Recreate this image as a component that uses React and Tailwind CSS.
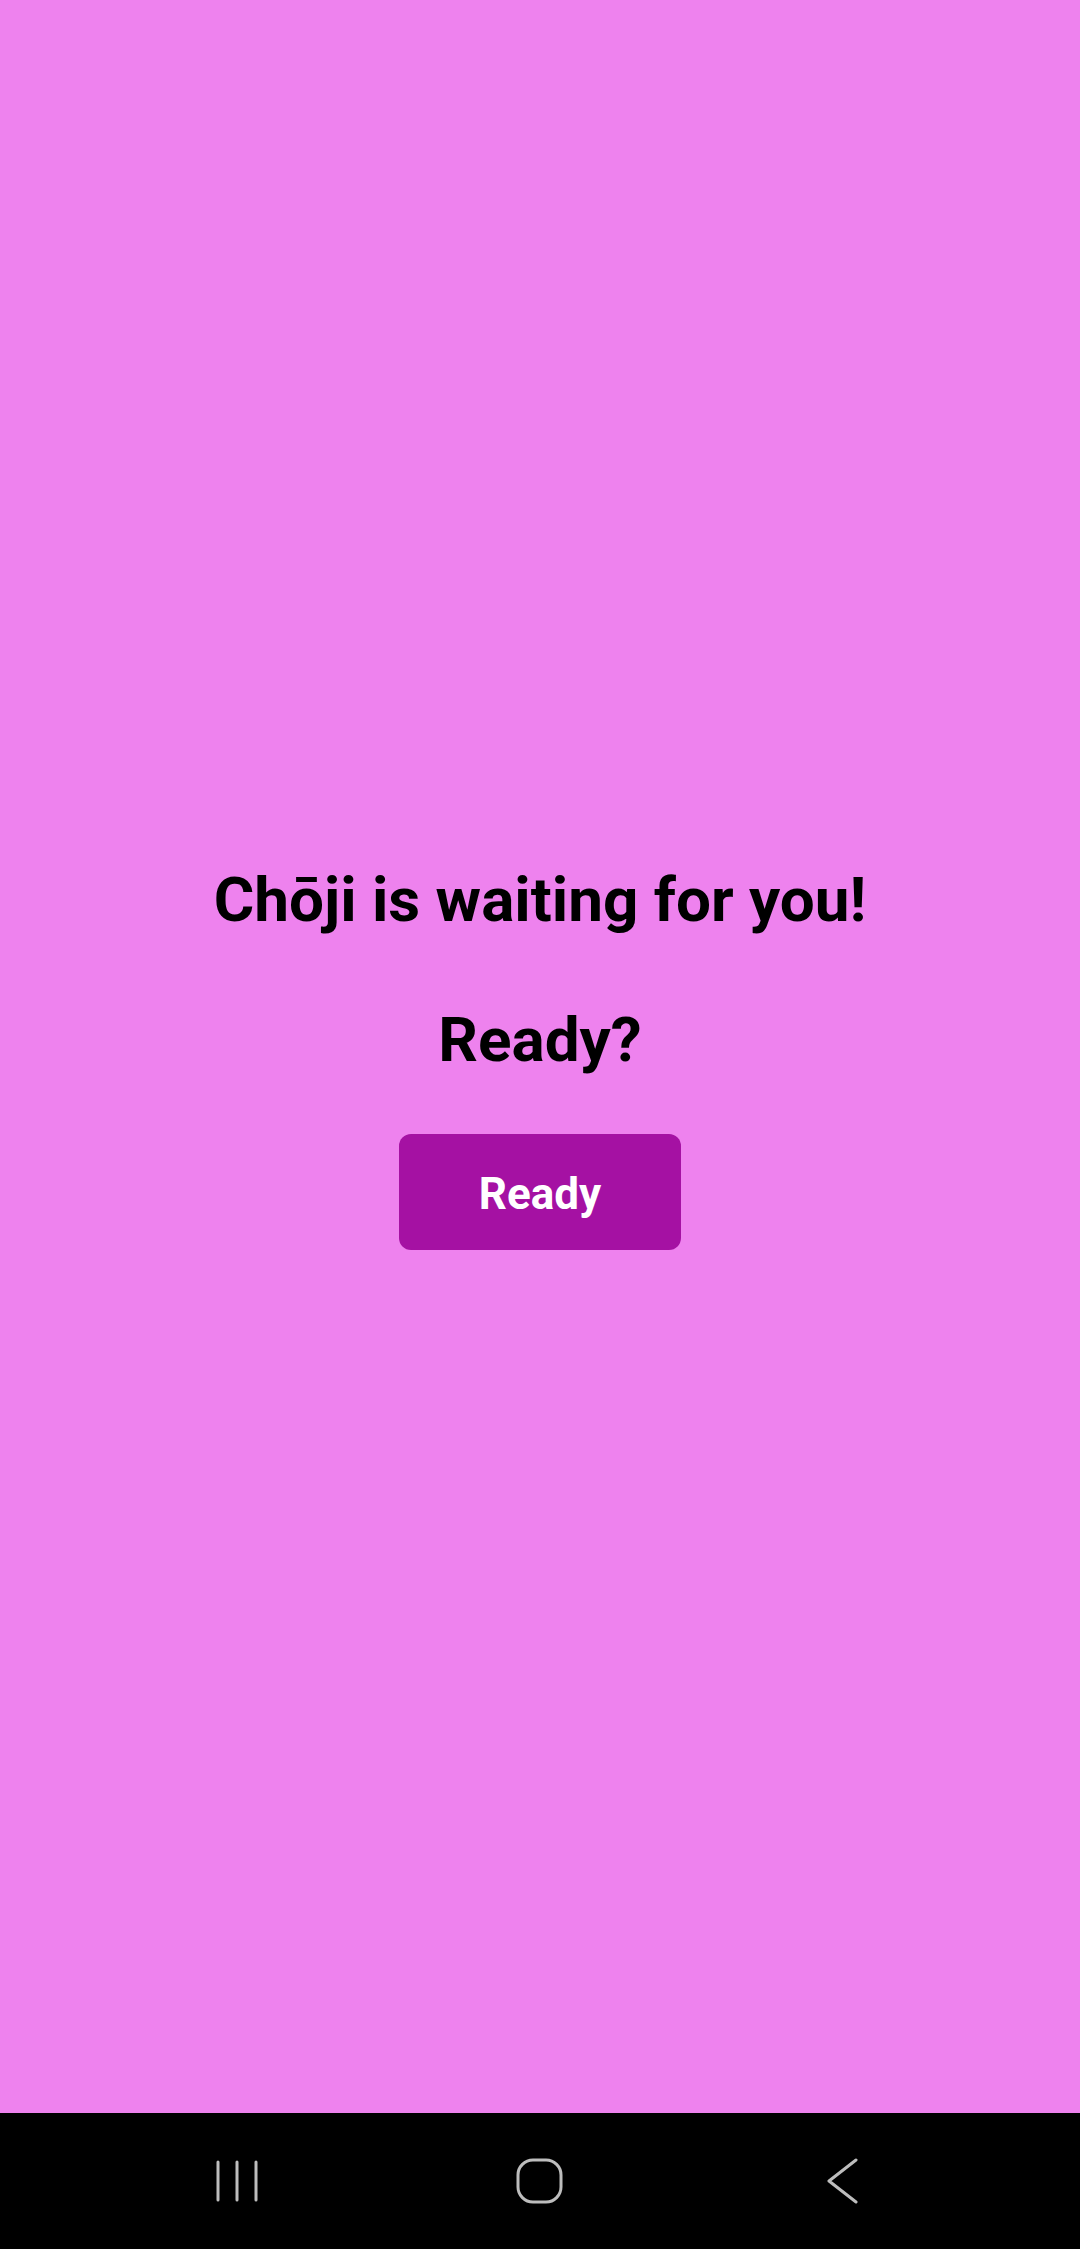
function NavBar() {
  return (
    <div className="flex h-[136px] items-center justify-center bg-black">
      <div className="flex w-[303px] items-center justify-center">
        <svg width="44" height="44" viewBox="0 0 44 44" fill="none" stroke="#bdbdbd" strokeWidth="3" strokeLinecap="round">
          <line x1="3" y1="3" x2="3" y2="41" />
          <line x1="22" y1="3" x2="22" y2="41" />
          <line x1="41" y1="3" x2="41" y2="41" />
        </svg>
      </div>
      <div className="flex w-[303px] items-center justify-center">
        <svg width="48" height="46" viewBox="0 0 48 46" fill="none" stroke="#bdbdbd" strokeWidth="3">
          <rect x="2" y="2" width="43" height="42" rx="15" />
        </svg>
      </div>
      <div className="flex w-[303px] items-center justify-center">
        <svg width="32" height="48" viewBox="0 0 32 48" fill="none" stroke="#bdbdbd" strokeWidth="3" strokeLinecap="round" strokeLinejoin="round">
          <polyline points="29,3 2,24 29,45" />
        </svg>
      </div>
    </div>
  );
}

export default function App() {
  return (
    <div className="flex min-h-[2249px] w-full flex-col font-['Roboto',sans-serif]">
      <div className="flex h-[2113px] flex-col items-center justify-center bg-[#ee82ee]">
        <h1 className="mb-[68px] text-[62px] font-bold leading-[72px] text-black">
          Chōji is waiting for you!
        </h1>
        <h1 className="mb-[58px] text-[62px] font-bold leading-[72px] text-black">
          Ready?
        </h1>
        <button
          type="button"
          className="flex h-[116px] w-[282px] items-center justify-center rounded-[12px] border-0 bg-[#a511a3] pt-1 text-[44px] font-bold text-white"
        >
          Ready
        </button>
      </div>
      <NavBar />
    </div>
  );
}
